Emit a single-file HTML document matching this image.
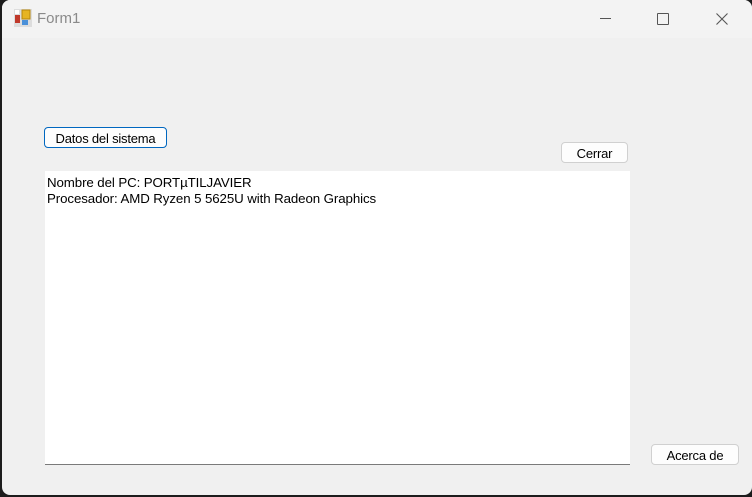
<!DOCTYPE html>
<html><head><style>
html,body{margin:0;padding:0;width:752px;height:497px;background:#1c1c1c;overflow:hidden}
.win{position:absolute;left:2px;top:0;width:750px;height:495px;background:#f0f0f0;border-radius:8px;overflow:hidden;font-family:"Liberation Sans",sans-serif}
.title{position:absolute;left:0;top:0;width:750px;height:38px;background:#f3f3f3}
.title span{position:absolute;left:35px;top:10px;font-size:15px;color:#8a8a8a}
.btn{position:absolute;background:#fdfdfd;border:1px solid #d0d0d0;border-radius:4px;font-size:13px;letter-spacing:-0.2px;color:#000;text-align:center;box-sizing:border-box}
.txt{position:absolute;left:43px;top:171px;width:585px;height:294px;background:#fff;border-bottom:1px solid #7a7a7a;font-size:13.3px;letter-spacing:-0.1px;line-height:16px;padding:4px 0 0 2px;box-sizing:border-box;color:#000}
</style></head><body>
<div class="win">
<div class="title">
<svg style="position:absolute;left:12px;top:9px" width="18" height="18">
<rect x="0" y="0" width="18" height="18" fill="#ddd"/>
<rect x="1" y="1" width="4" height="4" fill="#fff"/>
<rect x="1" y="6" width="5" height="8" fill="#c0392b"/>
<rect x="8" y="1" width="8" height="9" fill="#e6b422" stroke="#b8860b"/>
<rect x="8" y="11" width="6" height="5" fill="#4a90d9"/>
</svg>
<span>Form1</span>
<div style="position:absolute;left:598px;top:18px;width:11px;height:1px;background:#555"></div>
<div style="position:absolute;left:655px;top:13px;width:10px;height:10px;border:1px solid #555;border-radius:1px"></div>
<svg style="position:absolute;left:714px;top:13px" width="12" height="12"><path d="M0.5 0.5L11.5 11.5M11.5 0.5L0.5 11.5" stroke="#555" stroke-width="1.1"/></svg>
</div>
<div class="btn" style="left:42px;top:127px;width:123px;height:21px;border:1px solid #0067c0;line-height:21px">Datos del sistema</div>
<div class="btn" style="left:559px;top:142px;width:67px;height:21px;line-height:21px">Cerrar</div>
<div class="txt">Nombre del PC: PORTµTILJAVIER<br>Procesador: AMD Ryzen 5 5625U with Radeon Graphics</div>
<div class="btn" style="left:649px;top:444px;width:88px;height:21px;line-height:21px">Acerca de</div>
</div>
</body></html>
